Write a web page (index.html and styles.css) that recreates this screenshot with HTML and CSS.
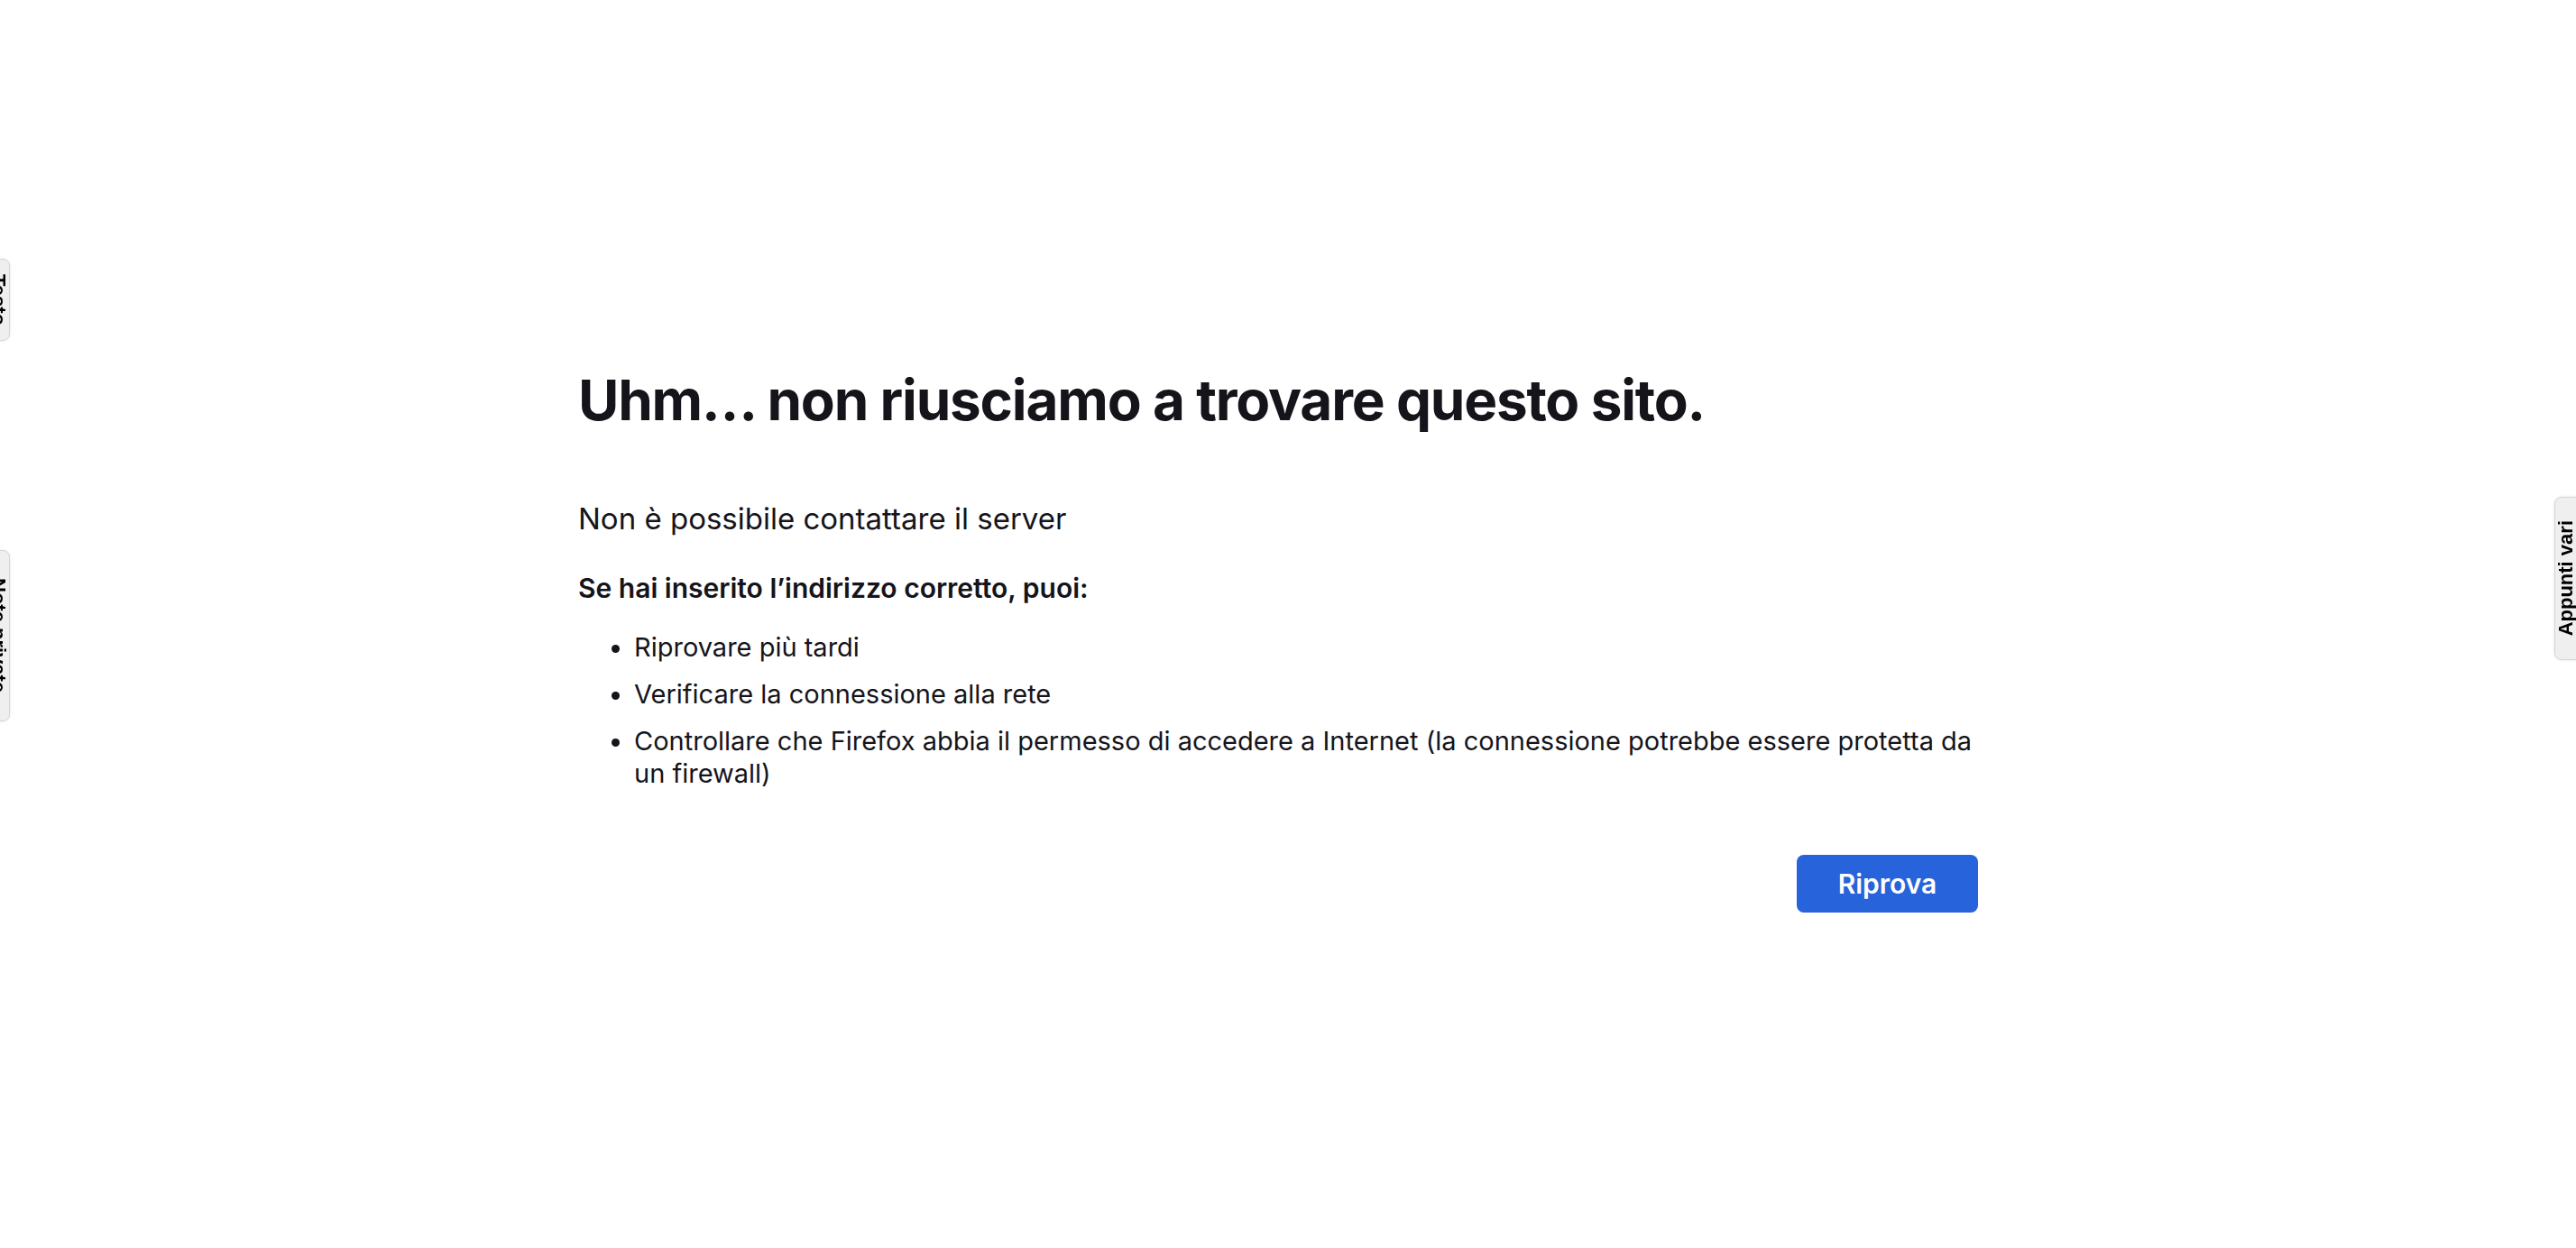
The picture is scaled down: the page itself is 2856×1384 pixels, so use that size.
FILE: index.html
```html
<!DOCTYPE html>
<html lang="it">
<head>
<meta charset="UTF-8">
<meta name="viewport" content="width=device-width, initial-scale=1.0">
<title>Problema di caricamento della pagina</title>
<link rel="stylesheet" href="styles.css">
</head>
<body>
<div class="container">
  <h1 class="title">Uhm… non riusciamo a trovare questo sito.</h1>
  <p class="short-desc">Non è possibile contattare il server</p>
  <div class="long-desc">
    <strong>Se hai inserito l’indirizzo corretto, puoi:</strong>
    <ul>
      <li>Riprovare più tardi</li>
      <li>Verificare la connessione alla rete</li>
      <li>Controllare che Firefox abbia il permesso di accedere a Internet (la connessione potrebbe essere protetta da un firewall)</li>
    </ul>
  </div>
  <div class="button-container">
    <button class="primary" id="tryAgain">Riprova</button>
  </div>
</div>

<!-- linguette della barra laterale (estensione) -->
<div class="side-tab left tab-one"><span>Testo</span></div>
<div class="side-tab left tab-two"><span>Note private</span></div>
<div class="side-tab right"><span>Appunti vari</span></div>
</body>
</html>
```

FILE: styles.css
```css
body {
  margin: 0;
  padding-right: 22px;
  font-family: Inter, "Noto Sans", sans-serif;
  color: #15141a;
  background-color: #fff;
}

.container {
  width: 1552px;
  margin: 0 auto;
  padding-top: 407px;
}

.title {
  margin: 0;
  font-size: 62px;
  font-weight: 700;
  letter-spacing: -1.2px;
  line-height: 1.2;
}

.short-desc {
  margin: 76px 0 0;
  font-size: 33px;
  line-height: 36px;
}

.long-desc {
  margin-top: 41px;
  font-size: 29px;
  line-height: 36px;
}

.long-desc strong {
  display: block;
  font-size: 30px;
  font-weight: 600;
}

ul {
  margin: 30px 0 0;
  padding-left: 62px;
}

li {
  margin-bottom: 16px;
}

li:last-child {
  margin-bottom: 0;
}

.button-container {
  display: flex;
  justify-content: flex-end;
  margin-top: 72px;
}

button.primary {
  min-width: 201px;
  height: 64px;
  padding: 0 40px;
  border: none;
  border-radius: 8px;
  background-color: #2763da;
  color: #fff;
  font-family: Inter, "Noto Sans", sans-serif;
  font-size: 30px;
  font-weight: 600;
  cursor: pointer;
}

button.primary:hover {
  background-color: #1f55c4;
}

/* linguette fisse ai bordi */
.side-tab {
  position: fixed;
  box-sizing: border-box;
  display: flex;
  align-items: center;
  justify-content: center;
  background-color: #efefef;
  border: 1px solid #d6d6d6;
  box-shadow: 0 0 3px rgba(0, 0, 0, 0.12);
  font-family: "Liberation Sans", Arial, sans-serif;
  font-weight: bold;
  font-size: 22px;
  color: #000;
  overflow: hidden;
}

.side-tab span {
  writing-mode: vertical-rl;
  white-space: nowrap;
}

.side-tab.left {
  left: -28px;
  width: 39px;
  border-radius: 0 8px 8px 0;
}

.side-tab.left span {
  margin-left: 12px;
}

.tab-one {
  top: 287px;
  height: 91px;
}

.tab-two {
  top: 610px;
  height: 190px;
}

.side-tab.right {
  right: -18px;
  top: 551px;
  width: 42px;
  height: 181px;
  border-radius: 8px 0 0 8px;
}

.side-tab.right span {
  transform: rotate(180deg);
  margin-right: 16px;
}
```
